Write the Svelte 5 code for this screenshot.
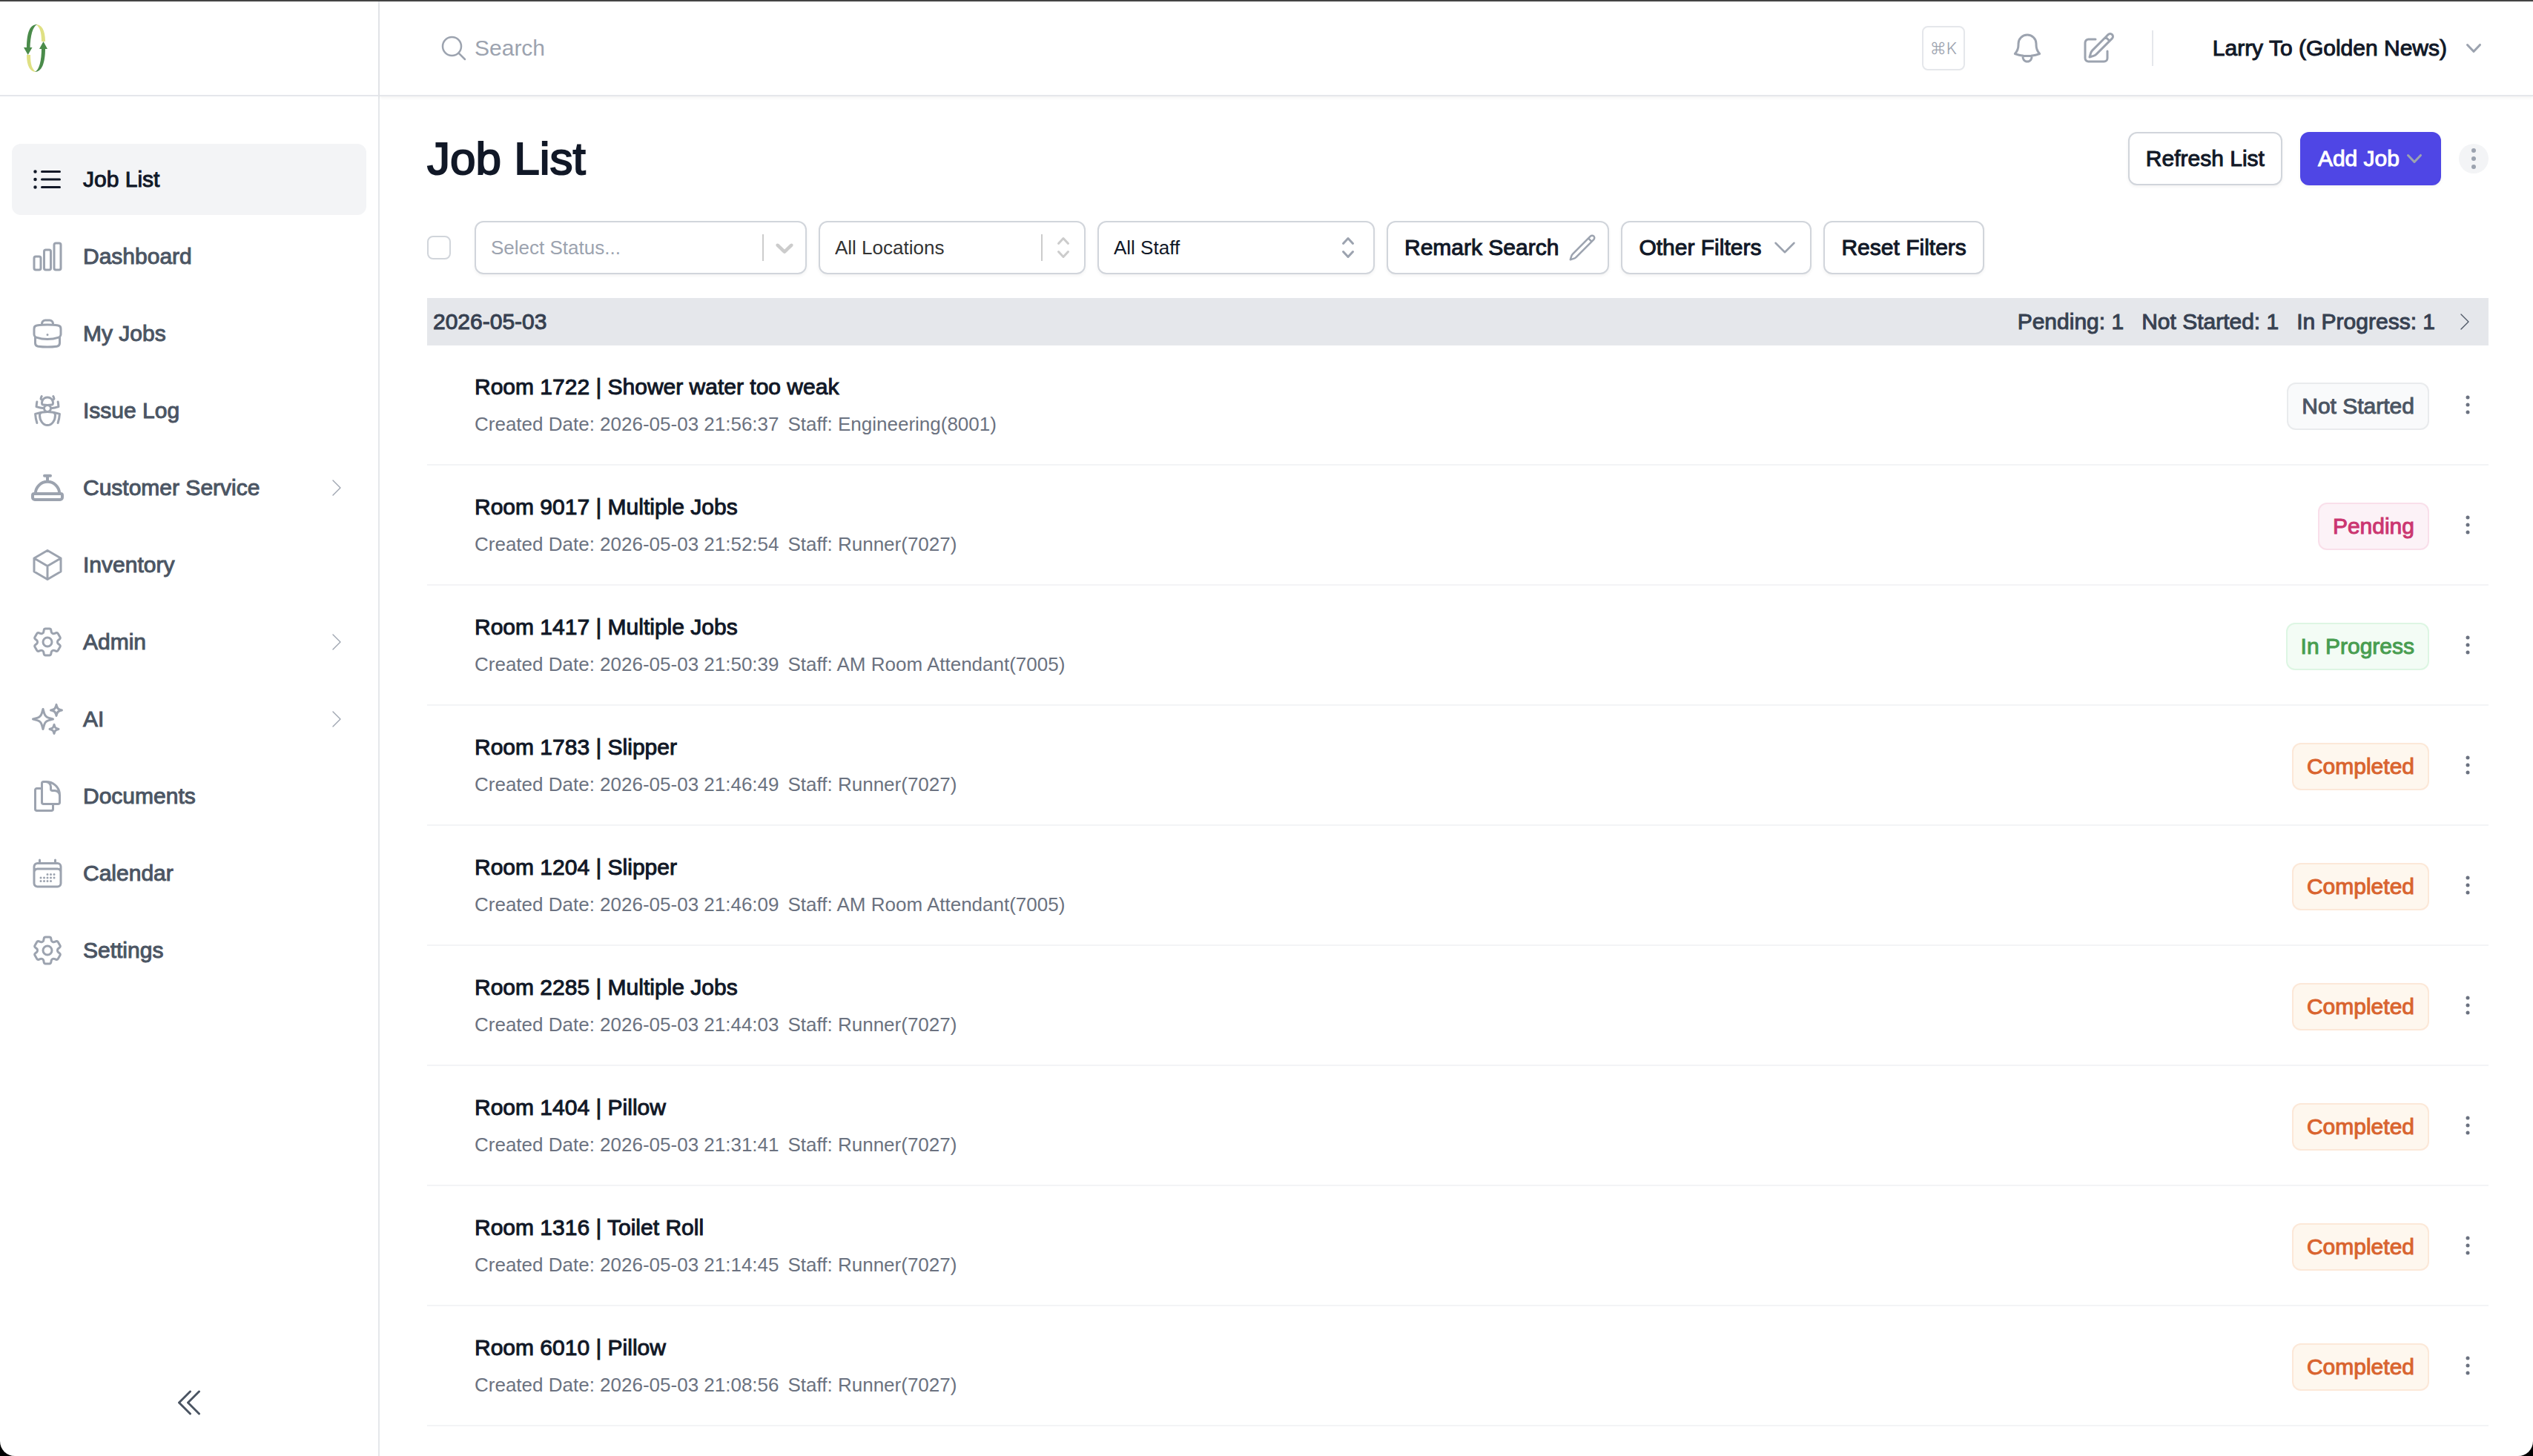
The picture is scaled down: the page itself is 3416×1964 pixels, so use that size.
<script lang='ts'>
  type NavItem = { name: string, icon: string, size?: string, active?: boolean, children?: boolean }
  type Job = { title: string, created: string, staff: string, status: string }

  const icons = {
    list: 'M8.25 6.75h12M8.25 12h12m-12 5.25h12M3.75 6.75h.007v.008H3.75V6.75zm.375 0a.375.375 0 11-.75 0 .375.375 0 01.75 0zM3.75 12h.007v.008H3.75V12zm.375 0a.375.375 0 11-.75 0 .375.375 0 01.75 0zm-.375 5.25h.007v.008H3.75v-.008zm.375 0a.375.375 0 11-.75 0 .375.375 0 01.75 0z',
    chart: 'M3 13.125C3 12.504 3.504 12 4.125 12h2.25c.621 0 1.125.504 1.125 1.125v6.75C7.5 20.496 6.996 21 6.375 21h-2.25A1.125 1.125 0 013 19.875v-6.75zM9.75 8.625c0-.621.504-1.125 1.125-1.125h2.25c.621 0 1.125.504 1.125 1.125v11.25c0 .621-.504 1.125-1.125 1.125h-2.25a1.125 1.125 0 01-1.125-1.125V8.625zM16.5 4.125c0-.621.504-1.125 1.125-1.125h2.25C20.496 3 21 3.504 21 4.125v15.75c0 .621-.504 1.125-1.125 1.125h-2.25a1.125 1.125 0 01-1.125-1.125V4.125z',
    briefcase: 'M20.25 14.15v4.25c0 1.094-.787 2.036-1.872 2.18-2.087.277-4.216.42-6.378.42s-4.291-.143-6.378-.42c-1.085-.144-1.872-1.086-1.872-2.18v-4.25m16.5 0a2.18 2.18 0 00.75-1.661V8.706c0-1.081-.768-2.015-1.837-2.175a48.114 48.114 0 00-3.413-.387m4.5 8.006c-.194.165-.42.295-.673.38A23.978 23.978 0 0112 15.75c-2.648 0-5.195-.429-7.577-1.22a2.016 2.016 0 01-.673-.38m0 0A2.18 2.18 0 013 12.489V8.706c0-1.081.768-2.015 1.837-2.175a48.111 48.111 0 013.413-.387m7.5 0V5.25A2.25 2.25 0 0013.5 3h-3a2.25 2.25 0 00-2.25 2.25v.894m7.5 0a48.667 48.667 0 00-7.5 0M12 12.75h.008v.008H12v-.008z',
    bug: 'M12 12.75c1.148 0 2.278.08 3.383.237 1.037.146 1.866.966 1.866 2.013 0 3.728-2.35 6.75-5.25 6.75S6.75 18.728 6.75 15c0-1.046.83-1.867 1.866-2.013A24.204 24.204 0 0112 12.75zm0 0c2.883 0 5.647.508 8.207 1.44a23.91 23.91 0 01-1.152 6.06M12 12.75c-2.883 0-5.647.508-8.208 1.44.125 2.104.52 4.136 1.153 6.06M12 12.75a2.25 2.25 0 002.248-2.354M12 12.75a2.25 2.25 0 01-2.248-2.354M12 8.25c.995 0 1.971-.08 2.922-.236.403-.066.74-.358.795-.762a3.778 3.778 0 00-.399-2.25M12 8.25c-.995 0-1.97-.08-2.922-.236-.402-.066-.74-.358-.795-.762a3.734 3.734 0 01.4-2.253M12 8.25a2.25 2.25 0 00-2.248 2.146M12 8.25a2.25 2.25 0 012.248 2.146M8.683 5a6.032 6.032 0 01-1.155-1.002c.07-.63.27-1.222.574-1.747m.581 2.749A3.75 3.75 0 0115.318 5m0 0c.427-.283.815-.62 1.155-.999a4.471 4.471 0 00-.575-1.752M4.921 6a24.048 24.048 0 00-.392 3.314c1.668.546 3.416.914 5.223 1.082M19.08 6c.205 1.08.337 2.187.392 3.314a23.882 23.882 0 01-5.223 1.082',
    service: 'M10 3.85h4M12 3.85v4M3.9 16a8.1 8.1 0 0116.2 0M3 16h18a1 1 0 011 1v1.5a1.5 1.5 0 01-1.5 1.5h-17A1.5 1.5 0 012 18.5V17a1 1 0 011-1z',
    cube: 'M21 7.5l-9-5.25L3 7.5m18 0l-9 5.25m9-5.25v9l-9 5.25M3 7.5l9 5.25M3 7.5v9l9 5.25m0-9v9',
    cog: 'M9.594 3.94c.09-.542.56-.94 1.11-.94h2.593c.55 0 1.02.398 1.11.94l.213 1.281c.063.374.313.686.645.87.074.04.147.083.22.127.324.196.72.257 1.075.124l1.217-.456a1.125 1.125 0 011.37.49l1.296 2.247a1.125 1.125 0 01-.26 1.431l-1.003.827c-.293.24-.438.613-.431.992a6.759 6.759 0 010 .255c-.007.378.138.75.43.99l1.005.828c.424.35.534.954.26 1.43l-1.298 2.247a1.125 1.125 0 01-1.369.491l-1.217-.456c-.355-.133-.75-.072-1.076.124a6.57 6.57 0 01-.22.128c-.331.183-.581.495-.644.869l-.213 1.28c-.09.543-.56.941-1.11.941h-2.594c-.55 0-1.02-.398-1.11-.94l-.213-1.281c-.062-.374-.312-.686-.644-.87a6.52 6.52 0 01-.22-.127c-.325-.196-.72-.257-1.076-.124l-1.217.456a1.125 1.125 0 01-1.369-.49l-1.297-2.247a1.125 1.125 0 01.26-1.431l1.004-.827c.292-.24.437-.613.43-.992a6.932 6.932 0 010-.255c.007-.378-.138-.75-.43-.99l-1.004-.828a1.125 1.125 0 01-.26-1.43l1.297-2.247a1.125 1.125 0 011.37-.491l1.216.456c.356.133.751.072 1.076-.124.072-.044.146-.087.22-.128.332-.183.582-.495.644-.869l.214-1.281zM15 12a3 3 0 11-6 0 3 3 0 016 0z',
    sparkles: 'M9.813 15.904L9 18.75l-.813-2.846a4.5 4.5 0 00-3.09-3.09L2.25 12l2.846-.813a4.5 4.5 0 003.09-3.09L9 5.25l.813 2.846a4.5 4.5 0 003.09 3.09L15.75 12l-2.846.813a4.5 4.5 0 00-3.09 3.09zM18.259 8.715L18 9.75l-.259-1.035a3.375 3.375 0 00-2.455-2.456L14.25 6l1.036-.259a3.375 3.375 0 002.455-2.456L18 2.25l.259 1.035a3.375 3.375 0 002.456 2.456L21.75 6l-1.035.259a3.375 3.375 0 00-2.456 2.456zM16.894 20.567L16.5 21.75l-.394-1.183a2.25 2.25 0 00-1.423-1.423L13.5 18.75l1.183-.394a2.25 2.25 0 001.423-1.423l.394-1.183.394 1.183a2.25 2.25 0 001.423 1.423l1.183.394-1.183.394a2.25 2.25 0 00-1.423 1.423z',
    documents: 'M15.75 17.25v3.375c0 .621-.504 1.125-1.125 1.125h-9.75a1.125 1.125 0 01-1.125-1.125V7.875c0-.621.504-1.125 1.125-1.125H6.75a9.06 9.06 0 011.5.124m7.5 10.376h3.375c.621 0 1.125-.504 1.125-1.125V11.25c0-4.46-3.243-8.161-7.5-8.876a9.06 9.06 0 00-1.5-.124H9.375c-.621 0-1.125.504-1.125 1.125v3.5m7.5 10.375H9.375a1.125 1.125 0 01-1.125-1.125v-9.25m12 6.625v-1.875a3.375 3.375 0 00-3.375-3.375h-1.5a1.125 1.125 0 01-1.125-1.125v-1.5a3.375 3.375 0 00-3.375-3.375H9.75',
    calendar: 'M6.75 3v2.25M17.25 3v2.25M3 18.75V7.5a2.25 2.25 0 012.25-2.25h13.5A2.25 2.25 0 0121 7.5v11.25m-18 0A2.25 2.25 0 005.25 21h13.5A2.25 2.25 0 0021 18.75m-18 0v-7.5A2.25 2.25 0 015.25 9h13.5A2.25 2.25 0 0121 11.25v7.5m-9-6h.008v.008H12v-.008zM12 15h.008v.008H12V15zm0 2.25h.008v.008H12v-.008zM9.75 15h.008v.008H9.75V15zm0 2.25h.008v.008H9.75v-.008zM7.5 15h.008v.008H7.5V15zm0 2.25h.008v.008H7.5v-.008zm6.75-4.5h.008v.008h-.008v-.008zm0 2.25h.008v.008h-.008V15zm0 2.25h.008v.008h-.008v-.008zm2.25-4.5h.008v.008H16.5v-.008zm0 2.25h.008v.008H16.5V15z',
    bell: 'M14.857 17.082a23.848 23.848 0 005.454-1.31A8.967 8.967 0 0118 9.75v-.7V9A6 6 0 006 9v.75a8.967 8.967 0 01-2.312 6.022c1.733.64 3.56 1.085 5.455 1.31m5.714 0a24.255 24.255 0 01-5.714 0m5.714 0a3 3 0 11-5.714 0',
    compose: 'M16.862 4.487l1.687-1.688a1.875 1.875 0 112.652 2.652L10.582 16.07a4.5 4.5 0 01-1.897 1.13L6 18l.8-2.685a4.5 4.5 0 011.13-1.897l8.932-8.931zm0 0L19.5 7.125M18 14v4.75A2.25 2.25 0 0115.75 21H5.25A2.25 2.25 0 013 18.75V8.25A2.25 2.25 0 015.25 6H10',
    pencil: 'M16.862 4.487l1.687-1.688a1.875 1.875 0 112.652 2.652L6.832 19.82a4.5 4.5 0 01-1.897 1.13l-2.685.8.8-2.685a4.5 4.5 0 011.13-1.897L16.863 4.487zm0 0L19.5 7.125',
    search: 'M21 21l-5.197-5.197m0 0A7.5 7.5 0 105.196 5.196a7.5 7.5 0 0010.607 10.607z',
    right: 'M8.25 4.5l7.5 7.5-7.5 7.5',
    down: 'M19.5 8.25l-7.5 7.5-7.5-7.5',
    collapse: 'M18.75 19.5l-7.5-7.5 7.5-7.5m-6 15L5.25 12l7.5-7.5'
  }

  // filled glyphs on a 20 unit grid
  const solid = {
    down: 'M5.23 7.21a.75.75 0 011.06.02L10 11.168l3.71-3.938a.75.75 0 111.08 1.04l-4.25 4.5a.75.75 0 01-1.08 0l-4.25-4.5a.75.75 0 01.02-1.06z',
    upDown: 'M10 3a.75.75 0 01.55.24l3.25 3.5a.75.75 0 11-1.1 1.02L10 4.852 7.3 7.76a.75.75 0 01-1.1-1.02l3.25-3.5A.75.75 0 0110 3zm-3.76 9.2a.75.75 0 011.06.04l2.7 2.908 2.7-2.908a.75.75 0 111.1 1.02l-3.25 3.5a.75.75 0 01-1.1 0l-3.25-3.5a.75.75 0 01.04-1.06z',
    boldDown: 'M4.516 7.548c.436-.446 1.043-.481 1.576 0L10 11.295l3.908-3.747c.533-.481 1.141-.446 1.574 0 .436.445.408 1.197 0 1.615-.406.418-4.695 4.502-4.695 4.502-.217.223-.502.335-.787.335s-.57-.112-.789-.335c0 0-4.287-4.084-4.695-4.502s-.436-1.17 0-1.615z'
  }

  const nav: NavItem[] = [
    { name: 'Job List', icon: icons.list, active: true },
    { name: 'Dashboard', icon: icons.chart },
    { name: 'My Jobs', icon: icons.briefcase },
    { name: 'Issue Log', icon: icons.bug },
    { name: 'Customer Service', icon: icons.service, size: 'heavy', children: true },
    { name: 'Inventory', icon: icons.cube },
    { name: 'Admin', icon: icons.cog, children: true },
    { name: 'AI', icon: icons.sparkles, children: true },
    { name: 'Documents', icon: icons.documents },
    { name: 'Calendar', icon: icons.calendar },
    { name: 'Settings', icon: icons.cog }
  ]

  const jobs: Job[] = [
    { title: 'Room 1722 | Shower water too weak', created: '2026-05-03 21:56:37', staff: 'Engineering(8001)', status: 'Not Started' },
    { title: 'Room 9017 | Multiple Jobs', created: '2026-05-03 21:52:54', staff: 'Runner(7027)', status: 'Pending' },
    { title: 'Room 1417 | Multiple Jobs', created: '2026-05-03 21:50:39', staff: 'AM Room Attendant(7005)', status: 'In Progress' },
    { title: 'Room 1783 | Slipper', created: '2026-05-03 21:46:49', staff: 'Runner(7027)', status: 'Completed' },
    { title: 'Room 1204 | Slipper', created: '2026-05-03 21:46:09', staff: 'AM Room Attendant(7005)', status: 'Completed' },
    { title: 'Room 2285 | Multiple Jobs', created: '2026-05-03 21:44:03', staff: 'Runner(7027)', status: 'Completed' },
    { title: 'Room 1404 | Pillow', created: '2026-05-03 21:31:41', staff: 'Runner(7027)', status: 'Completed' },
    { title: 'Room 1316 | Toilet Roll', created: '2026-05-03 21:14:45', staff: 'Runner(7027)', status: 'Completed' },
    { title: 'Room 6010 | Pillow', created: '2026-05-03 21:08:56', staff: 'Runner(7027)', status: 'Completed' }
  ]

  const statuses = ['Not Started', 'Pending', 'In Progress', 'Completed']

  // only statuses that still need attention are counted in the header
  const counts = ['Pending', 'Not Started', 'In Progress'].map(status => ({
    status,
    total: jobs.filter(job => job.status === status).length
  }))

  const slug = (status: string) => status.toLowerCase().replace(' ', '-')
</script>

{#snippet outline(path: string, size = '')}
  <svg class='icon {size}' viewBox='0 0 24 24' aria-hidden='true'><path d={path} /></svg>
{/snippet}

{#snippet filled(path: string)}
  <svg class='glyph' viewBox='0 0 20 20' aria-hidden='true'><path d={path} /></svg>
{/snippet}

<div class='app'>
  <aside class='sidebar'>
    <a class='brand' href='#home' aria-label='Home'>
      <svg class='logo' viewBox='0 0 32 66' aria-hidden='true'>
        <path class='lime' d='M16 1C24 1 29 8 29 24H24C24 12 22 4 16 1zM4 42H9C9 54 11 62 17 65C9 65 4 58 4 42z' />
        <path class='green' d='M18 1C9 1 4 10 4 33H8.5C9 16 12 4 18 1zM15 65C24 65 29 54 29 33H24C24 50 21 62 15 65z' />
        <path class='green' d='M0 32H11.5L5.7 42zM21 34H32L26.5 24z' />
      </svg>
    </a>
    <nav class='menu'>
      {#each nav as item}
        <a class='item' class:active={item.active} href='#{slug(item.name)}'>
          {@render outline(item.icon, item.size)}
          <span class='name'>{item.name}</span>
          {#if item.children}
            {@render outline(icons.right, 'thin')}
          {/if}
        </a>
      {/each}
    </nav>
    <button class='collapse' type='button' aria-label='Collapse sidebar'>
      {@render outline(icons.collapse)}
    </button>
  </aside>

  <div class='page'>
    <header class='topbar'>
      <label class='search'>
        {@render outline(icons.search, 'medium')}
        <input type='search' placeholder='Search' aria-label='Search'>
      </label>
      <kbd>⌘K</kbd>
      <div class='tools'>
        <button type='button' aria-label='Notifications'>{@render outline(icons.bell)}</button>
        <button type='button' aria-label='New note'>{@render outline(icons.compose)}</button>
      </div>
      <button class='user' type='button'>
        <span>Larry To (Golden News)</span>
        {@render filled(solid.down)}
      </button>
    </header>

    <main>
      <div class='heading'>
        <h1>Job List</h1>
        <button class='btn' type='button'>Refresh List</button>
        <button class='btn primary' type='button'>Add Job {@render filled(solid.down)}</button>
        <button class='more' type='button' aria-label='More actions'>
          <svg viewBox='0 0 40 40' aria-hidden='true'><circle cx='20' cy='9' r='3' /><circle cx='20' cy='20' r='3' /><circle cx='20' cy='31' r='3' /></svg>
        </button>
      </div>

      <div class='filters'>
        <input class='check' type='checkbox' aria-label='Select all jobs'>
        <div class='select status'>
          <select aria-label='Status'>
            <option>Select Status...</option>
            {#each statuses as status}
              <option>{status}</option>
            {/each}
          </select>
          <span class='indicator split'>{@render filled(solid.boldDown)}</span>
        </div>
        <div class='select location'>
          <select aria-label='Location'>
            <option>All Locations</option>
          </select>
          <span class='indicator split'>{@render filled(solid.upDown)}</span>
        </div>
        <div class='select staff'>
          <select aria-label='Staff'>
            <option>All Staff</option>
          </select>
          <span class='indicator'>{@render filled(solid.upDown)}</span>
        </div>
        <button class='btn with-icon' type='button'>Remark Search {@render outline(icons.pencil, 'medium')}</button>
        <button class='btn with-icon' type='button'>Other Filters {@render outline(icons.down, 'medium')}</button>
        <button class='btn' type='button'>Reset Filters</button>
      </div>

      <section>
        <div class='group'>
          <h2>2026-05-03</h2>
          {#each counts as count}
            <span>{count.status}: {count.total}</span>
          {/each}
          {@render outline(icons.right, 'thin')}
        </div>
        <ul class='jobs'>
          {#each jobs as job}
            <li>
              <div class='about'>
                <h3>{job.title}</h3>
                <p><span>Created Date: {job.created}</span><span>Staff: {job.staff}</span></p>
              </div>
              <span class='badge {slug(job.status)}'>{job.status}</span>
              <button class='dots' type='button' aria-label='Actions for {job.title}'>
                <svg viewBox='0 0 40 40' aria-hidden='true'><circle cx='20' cy='10' r='2.5' /><circle cx='20' cy='20' r='2.5' /><circle cx='20' cy='30' r='2.5' /></svg>
              </button>
            </li>
          {/each}
        </ul>
      </section>
    </main>
  </div>
</div>

<style>
  :global(body) {
    background: #000;
  }
  .app {
    display: flex;
    box-sizing: border-box;
    min-height: 100vh;
    border-top: 2px solid #444;
    border-radius: 0 0 20px 20px;
    background: #fff;
    color: #111827;
    font-family: Arial, "Liberation Sans", sans-serif;
    font-size: 30px;
    line-height: 48px;
  }
  .app :global(*) {
    box-sizing: border-box;
  }
  button, input, select {
    margin: 0;
    padding: 0;
    border: 0;
    background: none;
    color: inherit;
    font: inherit;
  }
  button {
    cursor: pointer;
  }
  h1, h2, h3, p, ul {
    margin: 0;
    padding: 0;
    font-size: inherit;
    font-weight: 400;
    list-style: none;
  }
  svg {
    display: block;
    flex: none;
  }
  /* medium weight on a family that only has regular and bold */
  .item, .user, .btn, .group, h1, h3, .badge {
    -webkit-text-stroke: 1px currentColor;
  }

  .icon {
    width: 48px;
    height: 48px;
    fill: none;
    stroke: #9ca3af;
    stroke-width: 1.5;
    stroke-linecap: round;
    stroke-linejoin: round;
  }
  .icon.heavy {
    stroke-width: 2;
  }
  .icon.medium {
    width: 40px;
    height: 40px;
  }
  .icon.thin {
    width: 32px;
    height: 32px;
    stroke-width: 1;
  }
  .glyph {
    width: 40px;
    height: 40px;
    fill: #9ca3af;
  }

  .sidebar {
    display: flex;
    flex-direction: column;
    flex: none;
    width: 512px;
    border-right: 2px solid #e5e7eb;
  }
  .brand {
    display: flex;
    align-items: center;
    height: 128px;
    padding: 0 32px;
    border-bottom: 2px solid #e5e7eb;
  }
  .logo {
    width: 32px;
    height: 66px;
  }
  .lime {
    fill: #dfe083;
  }
  .green {
    fill: #4a8b4a;
  }
  .menu {
    display: flex;
    flex-direction: column;
    flex: 1;
    gap: 8px;
    padding: 64px 16px;
  }
  .item {
    display: flex;
    align-items: center;
    gap: 24px;
    height: 96px;
    padding: 0 24px;
    border-radius: 12px;
    color: #4b5563;
    text-decoration: none;
  }
  .item .name {
    flex: 1;
  }
  .active {
    background: #f3f4f6;
    color: #111827;
  }
  .active .icon {
    stroke: #111827;
  }
  .collapse {
    display: flex;
    justify-content: center;
    padding: 48px 0;
  }
  .collapse .icon {
    stroke: #4b5563;
  }

  .page {
    flex: 1;
    min-width: 0;
  }
  .topbar {
    display: flex;
    align-items: center;
    height: 128px;
    padding: 0 60px 0 80px;
    border-bottom: 2px solid #e5e7eb;
    box-shadow: 0 2px 4px rgb(0 0 0 / .05);
  }
  .search {
    display: flex;
    align-items: center;
    flex: 1;
    gap: 8px;
  }
  .search input {
    flex: 1;
    min-width: 0;
    outline: none;
  }
  .search input::placeholder {
    color: #9ca3af;
    opacity: 1;
  }
  kbd {
    display: grid;
    place-items: center;
    width: 58px;
    height: 60px;
    border: 2px solid #e5e7eb;
    border-radius: 8px;
    color: #9ca3af;
    font-family: Inter, "DejaVu Sans", sans-serif;
    font-size: 22px;
    font-weight: 300;
  }
  .tools {
    display: flex;
    gap: 48px;
    padding: 0 48px 0 60px;
    border-right: 2px solid #e5e7eb;
  }
  .user {
    display: flex;
    align-items: center;
    gap: 16px;
    padding-left: 80px;
  }

  main {
    padding: 48px 60px 40px 64px;
  }
  .heading {
    display: flex;
    align-items: center;
    gap: 24px;
  }
  h1 {
    flex: 1;
    font-size: 62px;
    line-height: 72px;
    -webkit-text-stroke-width: 2px;
  }
  .btn {
    display: flex;
    align-items: center;
    height: 72px;
    padding: 0 22px;
    border: 2px solid #d1d5db;
    border-radius: 12px;
    background: #fff;
    box-shadow: 0 2px 4px rgb(0 0 0 / .05);
    white-space: nowrap;
  }
  .primary {
    padding-right: 14px;
    border-color: #4f46e5;
    background: #4f46e5;
    color: #fff;
  }
  .with-icon {
    gap: 12px;
    padding-right: 14px;
  }
  .more {
    width: 40px;
    height: 40px;
    border-radius: 50%;
    background: #f3f4f6;
    fill: #9ca3af;
  }

  .filters {
    display: flex;
    align-items: center;
    gap: 16px;
    padding: 48px 0 32px;
  }
  .check {
    width: 32px;
    height: 32px;
    margin-right: 16px;
    border: 2px solid #d1d5db;
    border-radius: 8px;
    appearance: none;
  }
  .check:checked {
    background: #4f46e5;
  }
  .select {
    position: relative;
    height: 72px;
    border: 2px solid #d1d5db;
    border-radius: 12px;
    box-shadow: 0 2px 4px rgb(0 0 0 / .05);
    font-size: 26px;
  }
  .select select {
    width: 100%;
    height: 100%;
    padding: 0 84px 0 20px;
    border-radius: 12px;
    appearance: none;
  }
  .status {
    width: 448px;
    color: #9ca3af;
  }
  .location {
    width: 360px;
    color: #333;
  }
  .staff {
    width: 374px;
  }
  /* sits over the right end of the select */
  .indicator {
    position: absolute;
    top: 14px;
    right: 14px;
    pointer-events: none;
  }
  .indicator.split {
    right: 8px;
    padding-left: 10px;
    background: linear-gradient(#ccc, #ccc) left center / 2px 36px no-repeat;
  }
  .split .glyph {
    fill: #ccc;
  }

  .group {
    display: flex;
    align-items: center;
    gap: 24px;
    height: 64px;
    padding: 0 16px 0 8px;
    background: #e5e7eb;
    color: #374151;
  }
  .group h2 {
    flex: 1;
  }
  .group .icon {
    stroke: #4b5563;
  }
  .jobs li {
    display: flex;
    align-items: center;
    gap: 32px;
    padding: 32px 8px 32px 64px;
    border-bottom: 2px solid #f3f4f6;
  }
  .about {
    flex: 1;
  }
  .about p {
    display: flex;
    gap: 12px;
    margin: 6px 0 2px;
    color: #6b7280;
    font-size: 26px;
    line-height: 40px;
  }
  .badge {
    height: 64px;
    margin-top: 4px;
    padding: 0 18px;
    border: 2px solid;
    border-radius: 12px;
    line-height: 60px;
  }
  .not-started {
    border-color: #e9ebed;
    background: #f9fafb;
    color: #4b5563;
  }
  .pending {
    border-color: #f9dfea;
    background: #fcf2f7;
    color: #cb3670;
  }
  .in-progress {
    border-color: #ddf6e3;
    background: #f3fcf5;
    color: #489d50;
  }
  .completed {
    border-color: #fce8d8;
    background: #fef7ee;
    color: #d9642f;
  }
  .dots {
    width: 40px;
    height: 40px;
    fill: #6b7280;
  }
</style>
